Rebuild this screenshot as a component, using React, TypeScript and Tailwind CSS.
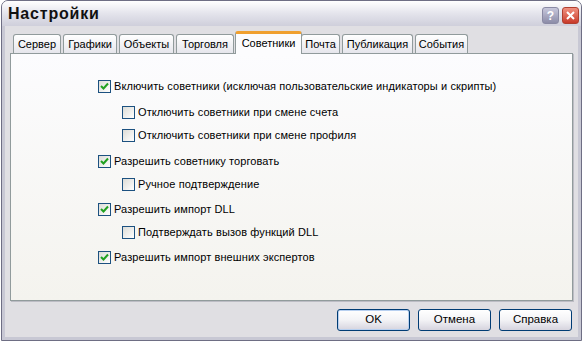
const tabs = [
  { label: "Сервер", w: "w-[48px]" },
  { label: "Графики", w: "w-[54px]" },
  { label: "Объекты", w: "w-[55px]" },
  { label: "Торговля", w: "w-[58px]" },
  { label: "Советники", w: "w-[67px]", active: true },
  { label: "Почта", w: "w-[39px]" },
  { label: "Публикация", w: "w-[71px]" },
  { label: "События", w: "w-[53px]" },
];

const options = [
  { label: "Включить советники (исключая пользовательские индикаторы и скрипты)", checked: true, sub: false, mt: "mt-0" },
  { label: "Отключить советники при смене счета", checked: false, sub: true, mt: "mt-[12px]" },
  { label: "Отключить советники при смене профиля", checked: false, sub: true, mt: "mt-[9px]" },
  { label: "Разрешить советнику торговать", checked: true, sub: false, mt: "mt-[12px]" },
  { label: "Ручное подтверждение", checked: false, sub: true, mt: "mt-[9px]" },
  { label: "Разрешить импорт DLL", checked: true, sub: false, mt: "mt-[11px]" },
  { label: "Подтверждать вызов функций DLL", checked: false, sub: true, mt: "mt-[9px]" },
  { label: "Разрешить импорт внешних экспертов", checked: true, sub: false, mt: "mt-[11px]" },
];

function CheckBox({ checked }: { checked: boolean }) {
  return (
    <span className="flex h-[13px] w-[13px] shrink-0 items-center justify-center border border-[#1c5180] bg-gradient-to-br from-[#dcdcd7] to-[#ffffff]">
      {checked && (
        <svg width="9" height="9" viewBox="0 0 9 9">
          <path d="M1 4 L3.5 6.5 L8 1.5" fill="none" stroke="#21a121" strokeWidth="2" />
        </svg>
      )}
    </span>
  );
}

function Button({ label, def }: { label: string; def?: boolean }) {
  return (
    <button
      className={`h-[22px] w-[73px] rounded-[3px] border border-[#003c74] bg-gradient-to-b from-[#ffffff] via-[#f3f3f6] to-[#d6d4de] text-[11.5px] text-black ${def ? "shadow-[inset_0_0_0_1px_#b8d0f0]" : ""}`}
    >
      {label}
    </button>
  );
}

export default function App() {
  return (
    <div className="h-[344px] w-[585px] bg-white pl-[1px] font-['Liberation_Sans',Arial,sans-serif]">
      <div className="flex h-[341px] w-[581px] flex-col overflow-hidden rounded-t-[7px] border border-[#6e6e84] bg-[#e0dfe3]">
        {/* title bar */}
        <div className="flex h-[25px] shrink-0 items-center justify-between bg-gradient-to-b from-[#ffffff] via-[#e4e4ec] to-[#cfcfdb] pl-[6px] pr-[2px]">
          <span className="text-[16px] font-bold tracking-[0.8px] text-[#111]">Настройки</span>
          <div className="flex gap-[3px] pt-[4px]">
            <span className="flex h-[17px] w-[17px] items-center justify-center rounded-[3px] border border-[#8a8aa4] bg-gradient-to-b from-[#c8c8dc] to-[#8c8ca8] text-[12px] font-bold leading-none text-white">?</span>
            <span className="flex h-[17px] w-[17px] items-center justify-center rounded-[3px] border border-[#b04030] bg-gradient-to-b from-[#f09080] to-[#c83828]">
              <svg width="9" height="9" viewBox="0 0 9 9">
                <path d="M1 1 L8 8 M8 1 L1 8" stroke="white" strokeWidth="2" />
              </svg>
            </span>
          </div>
        </div>

        {/* body */}
        <div className="flex flex-1 flex-col border-x-[3px] border-b-[3px] border-[#c8c8d4] px-[5px] pb-[6px]">
          {/* tabs */}
          <div className="flex h-[27px] items-end pl-[3px]">
            {tabs.map((t) =>
              t.active ? (
                <div
                  key={t.label}
                  className={`relative z-10 -mx-[1px] -mb-[1px] flex h-[23px] ${t.w} items-start justify-center rounded-t-[3px] border-x border-t-[3px] border-x-[#919b9c] border-t-[#f0a030] bg-[#fcfcfe] pt-[1px] text-[11px] text-black`}
                >
                  {t.label}
                </div>
              ) : (
                <div
                  key={t.label}
                  className={`mr-[2px] flex h-[19px] ${t.w} items-center justify-center rounded-t-[3px] border-x border-t border-[#919b9c] bg-gradient-to-b from-[#ffffff] to-[#e6e6ec] pt-[1px] text-[11px] text-black`}
                >
                  {t.label}
                </div>
              )
            )}
          </div>

          {/* panel */}
          <div className="flex h-[248px] flex-col border border-[#919b9c] bg-gradient-to-b from-[#fcfcfe] to-[#f4f3ee] pt-[25px] shadow-[1px_1px_0_#bcbcc4]">
            {options.map((o) => (
              <label
                key={o.label}
                className={`flex h-[14px] items-center gap-[3px] text-[11px] tracking-[0.1px] text-black ${o.mt} ${o.sub ? "pl-[111px]" : "pl-[87px]"}`}
              >
                <CheckBox checked={o.checked} />
                <span>{o.label}</span>
              </label>
            ))}
          </div>

          {/* buttons */}
          <div className="mt-[8px] flex justify-end gap-[8px] pr-[1px]">
            <Button label="OK" def />
            <Button label="Отмена" />
            <Button label="Справка" />
          </div>
        </div>
      </div>
    </div>
  );
}
